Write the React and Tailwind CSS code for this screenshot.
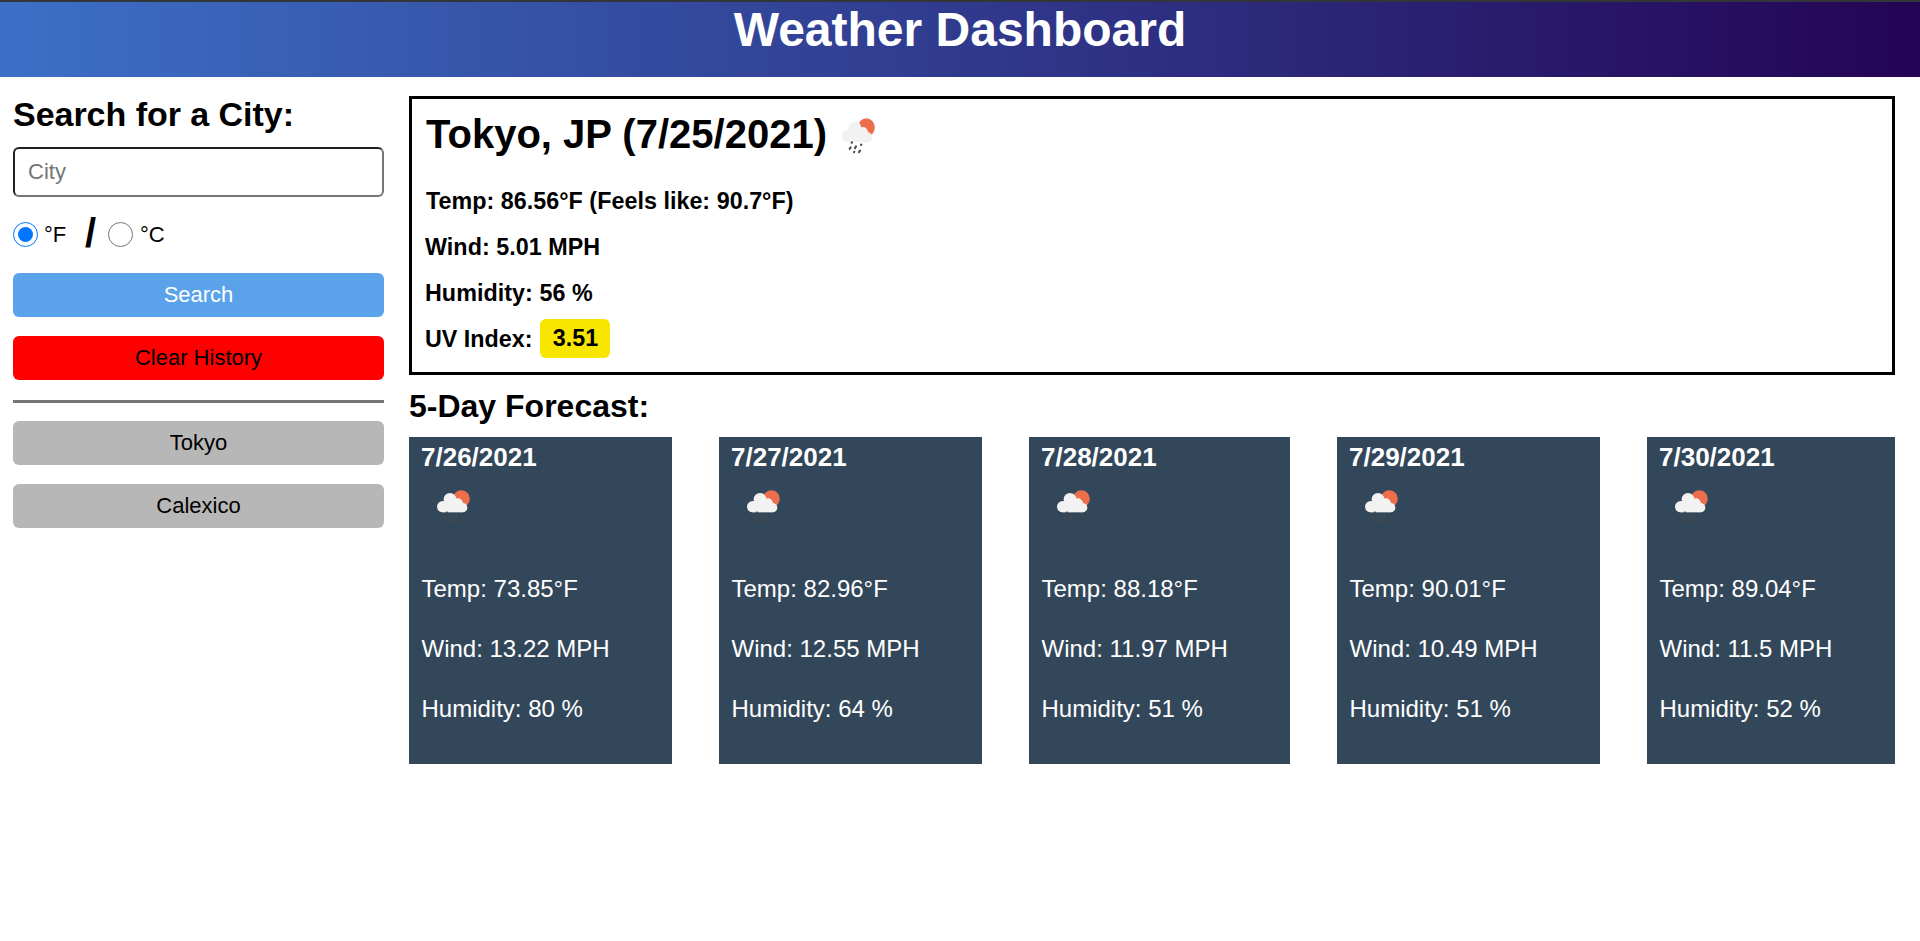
const forecast = [
  { date: "7/26/2021", temp: "73.85", wind: "13.22", humidity: 80 },
  { date: "7/27/2021", temp: "82.96", wind: "12.55", humidity: 64 },
  { date: "7/28/2021", temp: "88.18", wind: "11.97", humidity: 51 },
  { date: "7/29/2021", temp: "90.01", wind: "10.49", humidity: 51 },
  { date: "7/30/2021", temp: "89.04", wind: "11.5", humidity: 52 },
];

function RainIcon({ className }) {
  return (
    <svg viewBox="0 0 99 99" preserveAspectRatio="none" className={className} aria-hidden="true">
      <circle cx="73" cy="26" r="25.5" fill="#ec6e4c" />
      <g fill="#f2f2f2">
        <circle cx="17" cy="50" r="17" />
        <circle cx="39" cy="28" r="19" />
        <circle cx="63" cy="39" r="14" />
        <circle cx="77" cy="53" r="14" />
        <rect x="17" y="34" width="60" height="33" />
      </g>
      <g stroke="#484848" strokeWidth="6" strokeLinecap="round">
        <path d="M30 67l-1 1M58 73l-1 1M26 81l-3 4M42 78l-3 5M37 93l-1 1M54 90l-3 4" />
      </g>
    </svg>
  );
}

function Button({ className, children }) {
  return (
    <button className={`block h-11 w-full rounded-[6px] text-center text-[22px] leading-[44px] ${className}`}>
      {children}
    </button>
  );
}

function Radio({ checked }) {
  return (
    <span
      className={`flex size-[25px] items-center justify-center rounded-full border ${
        checked ? "border-[#0075ff]" : "border-[#767676]"
      }`}
    >
      {checked && <span className="size-[15px] rounded-full bg-[#0075ff]" />}
    </span>
  );
}

function Sidebar() {
  return (
    <aside className="w-[371px] shrink-0 pt-[17px]">
      <h2 className="text-[34px] leading-10 font-bold tracking-[-0.03px]">Search for a City:</h2>
      <input
        placeholder="City"
        className="mt-[13px] block h-[50px] w-full rounded-[6px] border-2 border-t-[#202020] border-r-[#767676] border-b-[#767676] border-l-[#202020] px-[13px] text-[22px] placeholder:text-[#757575]"
      />
      <div className="mt-[25px] flex h-[25px] items-start text-[22px] leading-[25px]">
        <Radio checked />
        <span className="ml-1.5 w-[41px]">°F</span>
        <span className="w-[23px] text-[40px] leading-[22px] font-bold">/</span>
        <Radio />
        <span className="ml-[7px]">°C</span>
      </div>
      <Button className="mt-[26px] bg-[#5aa2ea] text-white">Search</Button>
      <Button className="mt-[19px] bg-[#ff0000]">Clear History</Button>
      <div className="mt-5 mb-[18px] h-[3px] bg-[#767676]" />
      <div className="flex flex-col gap-[19px]">
        <Button className="bg-[#b7b7b7]">Tokyo</Button>
        <Button className="bg-[#b7b7b7]">Calexico</Button>
      </div>
    </aside>
  );
}

function Current() {
  return (
    <section className="h-[279px] border-[3px] border-black px-3.5 pt-3">
      <div className="flex">
        <h2 className="text-[40px] leading-[46px] font-bold">Tokyo, JP (7/25/2021)</h2>
        <RainIcon className="mt-[7px] ml-[15px] h-9 w-[33px]" />
      </div>
      <div className="mt-[21px] text-[23.3px] leading-[46px] font-bold">
        <p className="tracking-[0.03px]">Temp: 86.56°F (Feels like: 90.7°F)</p>
        <p className="-ml-px tracking-[0.05px]">Wind: 5.01 MPH</p>
        <p className="-ml-px tracking-[0.05px]">Humidity: 56 %</p>
        <div className="-ml-px flex">
          <span>UV Index:</span>
          <span className="mt-[3px] ml-2 h-[39px] w-[70px] rounded-[6px] bg-[#f8e600] text-center leading-[38px]">
            3.51
          </span>
        </div>
      </div>
    </section>
  );
}

function ForecastCard({ day }) {
  return (
    <article className="h-[327px] bg-[#33475b] px-[12.5px] pt-[5px] text-white">
      <h4 className="-ml-[0.5px] text-[26px] leading-[31px] font-bold">{day.date}</h4>
      <div className="h-[86px] pt-[17px] pl-[15.5px]">
        <RainIcon className="h-[33px] w-[33px]" />
      </div>
      <div className="text-[24px] leading-[60px]">
        <p>Temp: {day.temp}°F</p>
        <p>Wind: {day.wind} MPH</p>
        <p>Humidity: {day.humidity} %</p>
      </div>
    </article>
  );
}

export default function App() {
  return (
    <div className="h-[941px] overflow-hidden bg-white font-['Liberation_Sans',Arial,sans-serif] text-black">
      <header className="h-[77px] border-t-2 border-[#323639] bg-linear-to-r/srgb from-[#3c70c6] to-[#240454]">
        <h1 className="text-center text-[48px] leading-[55px] font-bold text-white">Weather Dashboard</h1>
      </header>
      <div className="flex gap-[25px] pr-[25px] pl-[13px]">
        <Sidebar />
        <main className="flex-1 pt-[19px]">
          <Current />
          <h3 className="mt-[13px] mb-[13px] text-[32px] leading-9 font-bold">5-Day Forecast:</h3>
          <div className="grid grid-cols-[263px_263px_261px_263px_248px] gap-[47px]">
            {forecast.map((day) => (
              <ForecastCard key={day.date} day={day} />
            ))}
          </div>
        </main>
      </div>
    </div>
  );
}
